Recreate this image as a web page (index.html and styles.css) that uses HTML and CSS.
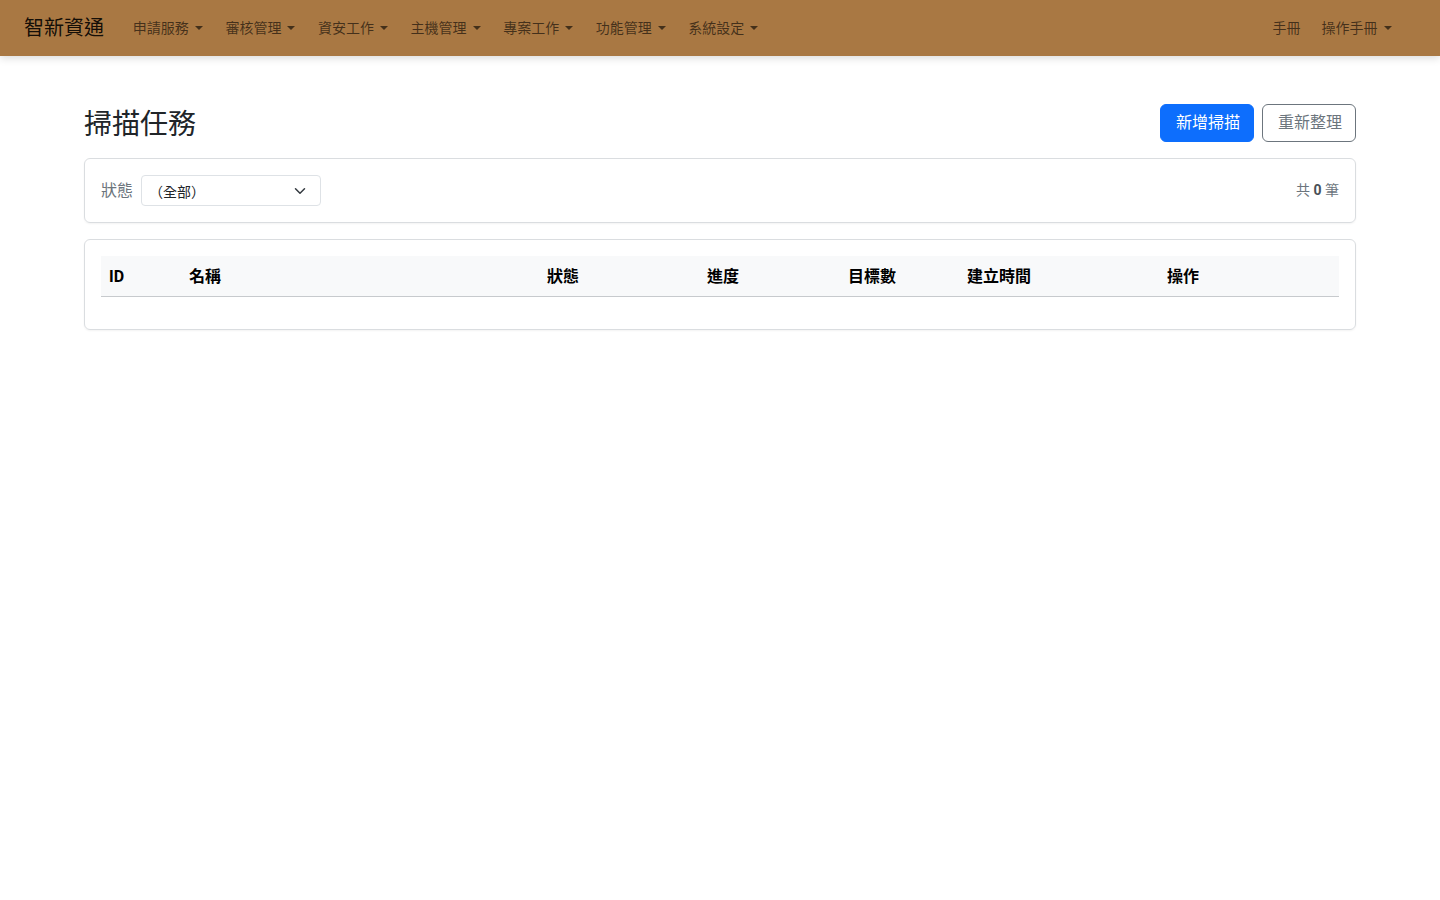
FILE: index.html
```html
<!DOCTYPE html>
<html lang="zh-Hant">

<head>
    <meta charset="UTF-8">
    <title>掃描任務</title>
    <link rel="stylesheet" href="styles.css">
</head>

<body>
    <nav class="navbar">
        <a class="brand" href="#">智新資通</a>
        <ul class="nav">
            <li><a class="nav-link dropdown" href="#">申請服務</a></li>
            <li><a class="nav-link dropdown" href="#">審核管理</a></li>
            <li><a class="nav-link dropdown" href="#">資安工作</a></li>
            <li><a class="nav-link dropdown" href="#">主機管理</a></li>
            <li><a class="nav-link dropdown" href="#">專案工作</a></li>
            <li><a class="nav-link dropdown" href="#">功能管理</a></li>
            <li><a class="nav-link dropdown" href="#">系統設定</a></li>
        </ul>
        <ul class="nav nav-right">
            <li><a class="nav-link" href="#">手冊</a></li>
            <li><a class="nav-link dropdown" href="#">操作手冊</a></li>
        </ul>
    </nav>

    <main class="container">
        <div class="page-head">
            <h3 class="page-title">掃描任務</h3>
            <div class="actions">
                <button class="btn btn-primary" type="button">新增掃描</button>
                <button class="btn btn-outline" type="button">重新整理</button>
            </div>
        </div>

        <div class="card filter">
            <label class="filter-label" for="status">狀態</label>
            <div class="select-wrap">
                <select id="status" class="select">
                    <option>（全部）</option>
                    <option>執行中</option>
                    <option>已完成</option>
                    <option>失敗</option>
                </select>
                <svg class="chevron" width="12" height="12" viewBox="0 0 16 16">
                    <path d="M2 5l6 6 6-6" fill="none" stroke="#343a40" stroke-width="2"
                        stroke-linecap="round" stroke-linejoin="round" />
                </svg>
            </div>
            <span class="total">共 <b>0</b> 筆</span>
        </div>

        <div class="card">
            <table class="table">
                <thead>
                    <tr>
                        <th class="col-id">ID</th>
                        <th class="col-name">名稱</th>
                        <th class="col-status">狀態</th>
                        <th class="col-progress">進度</th>
                        <th class="col-targets">目標數</th>
                        <th class="col-created">建立時間</th>
                        <th>操作</th>
                    </tr>
                </thead>
                <tbody></tbody>
            </table>
        </div>
    </main>
</body>

</html>
```

FILE: styles.css
```css
* {
    box-sizing: border-box;
    margin: 0;
    padding: 0;
}

body {
    font-family: Roboto, "Noto Sans CJK TC", sans-serif;
    font-size: 16px;
    line-height: 1.5;
    color: #212529;
    background: #fff;
}

a {
    text-decoration: none;
}

/* top bar */
.navbar {
    height: 56px;
    display: flex;
    align-items: center;
    padding: 0 38px 0 24px;
    background: #a97843;
    box-shadow: 0 2px 8px rgba(0, 0, 0, 0.15);
}

.brand {
    font-size: 20px;
    color: rgba(0, 0, 0, 0.9);
    margin-right: 17.5px;
}

.nav {
    display: flex;
    list-style: none;
}

.nav-right {
    margin-left: auto;
}

.nav-link {
    display: block;
    padding: 8px 11.3px;
    font-size: 14px;
    color: rgba(0, 0, 0, 0.6);
}

.nav-right .nav-link {
    padding: 8px 10.5px;
}

.dropdown::after {
    content: "";
    display: inline-block;
    margin-left: 6px;
    vertical-align: 3px;
    border-top: 4px solid;
    border-right: 4px solid transparent;
    border-left: 4px solid transparent;
}

/* page */
.container {
    max-width: 1272px;
    margin: 0 auto;
    padding-top: 48px;
}

.page-head {
    display: flex;
    align-items: center;
    justify-content: space-between;
    margin-bottom: 16px;
}

.page-title {
    font-size: 28px;
    font-weight: 400;
    line-height: 1.2;
    margin-top: 4px;
}

.actions {
    display: flex;
    gap: 8px;
}

.btn {
    font-family: inherit;
    font-size: 16px;
    line-height: 24px;
    padding: 6px 13px 6px 15px;
    border-radius: 6px;
    border: 1px solid transparent;
    cursor: pointer;
}

.btn-primary {
    background: #0d6efd;
    border-color: #0d6efd;
    color: #fff;
}

.btn-outline {
    background: #fff;
    border-color: #6c757d;
    color: #6c757d;
}

.card {
    border: 1px solid #dadde0;
    border-radius: 6px;
    padding: 16px;
    margin-bottom: 16px;
    box-shadow: 0 1px 2px rgba(0, 0, 0, 0.05);
}

.filter {
    display: flex;
    align-items: center;
}

.filter-label {
    font-size: 16px;
    color: #6c757d;
    margin-right: 8px;
}

.select-wrap {
    position: relative;
    width: 180px;
}

.select {
    width: 100%;
    height: 31px;
    appearance: none;
    font-family: "Noto Sans CJK TC", sans-serif;
    font-size: 14px;
    color: #212529;
    padding: 0 32px 0 7px;
    border: 1px solid #dee2e6;
    border-radius: 4px;
    background: #fff;
}

.chevron {
    position: absolute;
    top: 10px;
    right: 15px;
    width: 12px;
    height: 12px;
    pointer-events: none;
}

.total {
    margin-left: auto;
    font-size: 14px;
    color: #6c757d;
}

.total b {
    color: #495057;
}

.table {
    width: 100%;
    border-collapse: collapse;
    margin-bottom: 16px;
}

.table th {
    text-align: left;
    font-weight: 700;
    padding: 9px 8px 7px;
    line-height: 24px;
    background: #f8f9fa;
    color: #000;
    border-bottom: 1px solid #c7cacd;
}

.col-id {
    width: 80px;
}

.col-name {
    width: 358px;
}

.col-status {
    width: 160px;
}

.col-progress {
    width: 141px;
}

.col-targets {
    width: 119px;
}

.col-created {
    width: 200px;
}
```
